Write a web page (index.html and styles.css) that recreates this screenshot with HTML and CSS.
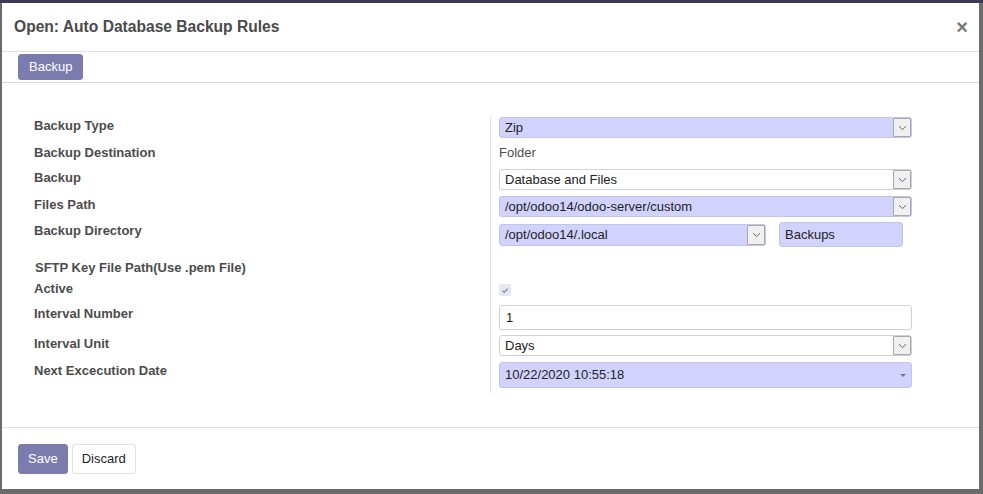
FILE: index.html
```html
<!DOCTYPE html>
<html>
<head>
<meta charset="utf-8">
<link rel="stylesheet" href="styles.css">
</head>
<body>
<div class="page">
  <div class="modal">
    <div class="modal-header">
      <h4 class="modal-title">Open: Auto Database Backup Rules</h4>
      <span class="close">×</span>
    </div>
    <div class="button-bar">
      <button class="btn btn-primary btn-sm">Backup</button>
    </div>
    <div class="modal-body">
      <div class="form">
        <div class="row r27">
          <div class="label">Backup Type</div>
          <div class="cell">
            <div class="sel req"><span class="val">Zip</span><span class="arrow"><svg width="9" height="6" viewBox="0 0 9 6"><path d="M1 1.2 L4.5 4.6 L8 1.2" fill="none" stroke="#666" stroke-width="1"/></svg></span></div>
          </div>
        </div>
        <div class="row r25">
          <div class="label">Backup Destination</div>
          <div class="cell"><span class="plain">Folder</span></div>
        </div>
        <div class="row r27">
          <div class="label">Backup</div>
          <div class="cell">
            <div class="sel"><span class="val">Database and Files</span><span class="arrow"><svg width="9" height="6" viewBox="0 0 9 6"><path d="M1 1.2 L4.5 4.6 L8 1.2" fill="none" stroke="#666" stroke-width="1"/></svg></span></div>
          </div>
        </div>
        <div class="row r26">
          <div class="label">Files Path</div>
          <div class="cell">
            <div class="sel req"><span class="val">/opt/odoo14/odoo-server/custom</span><span class="arrow"><svg width="9" height="6" viewBox="0 0 9 6"><path d="M1 1.2 L4.5 4.6 L8 1.2" fill="none" stroke="#666" stroke-width="1"/></svg></span></div>
          </div>
        </div>
        <div class="row r37">
          <div class="label">Backup Directory</div>
          <div class="cell cell-dir">
            <div class="sel req sel-dir"><span class="val">/opt/odoo14/.local</span><span class="arrow"><svg width="9" height="6" viewBox="0 0 9 6"><path d="M1 1.2 L4.5 4.6 L8 1.2" fill="none" stroke="#666" stroke-width="1"/></svg></span></div>
            <div class="inp req inp-dir">Backups</div>
          </div>
        </div>
        <div class="row r21">
          <div class="label label-in">SFTP Key File Path(Use .pem File)</div>
          <div class="cell"></div>
        </div>
        <div class="row r25">
          <div class="label">Active</div>
          <div class="cell">
            <span class="check"><svg width="8" height="7" viewBox="0 0 8 7"><path d="M1.5 3.8 L3.2 5.3 L6.6 1.8" fill="none" stroke="#8c8cb4" stroke-width="1.3"/></svg></span>
          </div>
        </div>
        <div class="row r30">
          <div class="label">Interval Number</div>
          <div class="cell">
            <div class="inp inp-num">1</div>
          </div>
        </div>
        <div class="row r27">
          <div class="label">Interval Unit</div>
          <div class="cell">
            <div class="sel"><span class="val">Days</span><span class="arrow"><svg width="9" height="6" viewBox="0 0 9 6"><path d="M1 1.2 L4.5 4.6 L8 1.2" fill="none" stroke="#666" stroke-width="1"/></svg></span></div>
          </div>
        </div>
        <div class="row r31">
          <div class="label">Next Excecution Date</div>
          <div class="cell">
            <div class="inp req inp-date"><span class="val">10/22/2020 10:55:18</span><span class="caret"></span></div>
          </div>
        </div>
      </div>
    </div>
    <div class="modal-footer">
      <button class="btn btn-primary">Save</button>
      <button class="btn btn-secondary">Discard</button>
    </div>
  </div>
</div>
</body>
</html>
```

FILE: styles.css
```css
* { box-sizing: border-box; }
html, body { margin: 0; padding: 0; }
body {
  width: 983px;
  height: 494px;
  overflow: hidden;
  font-family: "Liberation Sans", Arial, sans-serif;
  font-size: 13px;
  color: #4c4c4c;
  background: linear-gradient(#3d3b55 0 3px, #6b6b6b 3px);
}
.page {
  padding: 3px 4px 5px 2px;
  height: 494px;
}
.modal {
  width: 977px;
  height: 486px;
  background: #fff;
  display: flex;
  flex-direction: column;
}
.modal-header {
  height: 49px;
  padding: 12px 12px;
  border-bottom: 1px solid #dee2e6;
  display: flex;
  align-items: flex-start;
  justify-content: space-between;
}
.modal-title {
  margin: 0;
  font-size: 15.6px;
  line-height: 24px;
  font-weight: bold;
  color: #4a4a4a;
}
.close {
  font-size: 20px;
  font-weight: bold;
  line-height: 24px;
  color: #777;
  margin-right: -1px;
}
.button-bar {
  height: 31px;
  padding: 2px 16px;
  border-bottom: 1px solid #d6dadf;
}
.btn {
  font-family: "Liberation Sans", Arial, sans-serif;
  font-size: 13px;
  border-radius: 3px;
  border: 1px solid transparent;
  padding: 0 9px;
  height: 30px;
  line-height: 28px;
  cursor: pointer;
}
.btn-sm { height: 26px; line-height: 24px; padding: 0 10px; }
.btn-primary { background: #7c7bad; color: #fff; border-color: #7c7bad; }
.btn-secondary { background: #fff; color: #212529; border-color: #dee2e6; margin-left: 4px; }
.modal-body {
  flex: 1;
  padding: 34px 0 0 32px;
  border-bottom: 1px solid #dedede;
}
.form { width: 880px; }
.row {
  display: grid;
  grid-template-columns: 456px 422px;
}
.r21 { height: 21px; }
.r25 { height: 25px; }
.r26 { height: 26px; }
.r27 { height: 27px; }
.r30 { height: 30px; }
.r31 { height: 31px; }
.r37 { height: 37px; }
.label {
  font-weight: bold;
  line-height: 18px;
  color: #4c4c4c;
}
.label-in { padding-left: 1px; }
.cell {
  border-left: 1px solid #e2e2e2;
  padding-left: 8px;
}
.plain { line-height: 18px; color: #4c4c4c; }
.sel {
  width: 413px;
  height: 21px;
  display: flex;
  border: 1px solid #cfcfd8;
  border-radius: 3px;
  background: #fff;
  color: #222;
}
.sel.req, .inp.req { background: #d2d2ff; border-color: #c4c4e4; }
.val {
  flex: 1;
  line-height: 19px;
  padding-left: 5px;
  white-space: nowrap;
}
.arrow {
  width: 18px;
  height: 19px;
  border: 1px solid #a9a9a9;
  border-radius: 1px;
  background: #f0f0f0;
  display: flex;
  align-items: center;
  justify-content: center;
}
.cell-dir { display: flex; align-items: flex-start; gap: 13px; }
.sel-dir { width: 267px; margin-top: 2px; height: 22px; }
.sel-dir .arrow { height: 20px; }
.sel-dir .val { line-height: 20px; }
.inp {
  border: 1px solid #cfcfd8;
  border-radius: 3px;
  background: #fff;
  color: #222;
  padding-left: 5px;
}
.inp-dir { width: 124px; height: 25px; line-height: 23px; }
.inp-num { width: 413px; height: 25px; line-height: 23px; padding-left: 6px; }
.inp-date {
  width: 413px;
  height: 26px;
  display: flex;
  align-items: center;
  padding-left: 0;
}
.inp-date .val { line-height: 24px; }
.caret {
  width: 0;
  height: 0;
  border-left: 3px solid transparent;
  border-right: 3px solid transparent;
  border-top: 3px solid #777;
  margin-right: 5px;
}
.check {
  margin-top: 4px;
  width: 12px;
  height: 12px;
  border-radius: 2px;
  background: #e6e6ef;
  display: flex;
  align-items: center;
  justify-content: center;
}
.modal-footer {
  height: 61px;
  padding: 16px 16px;
  display: flex;
  align-items: flex-start;
}
```
